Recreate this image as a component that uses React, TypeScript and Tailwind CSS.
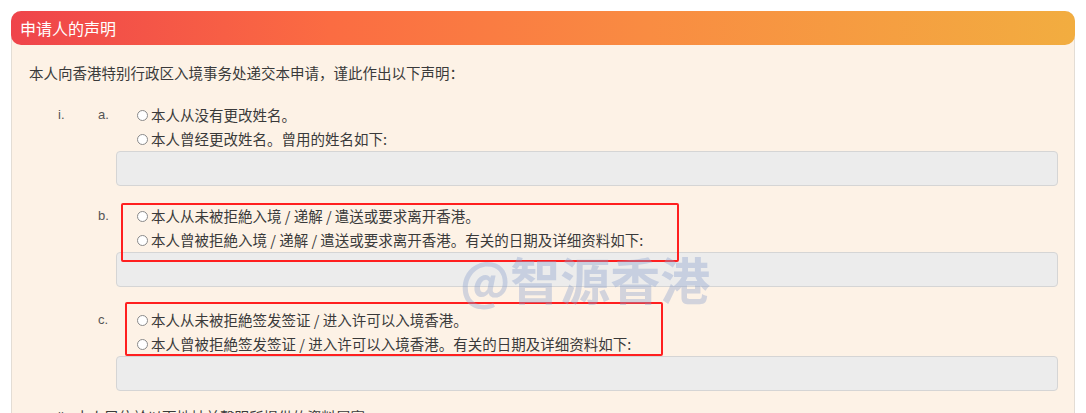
import React from 'react';

const cjk = "font-['Noto_Sans_CJK_SC','Noto_Sans',sans-serif]";

const Radio = ({ label }: { label: string }) => (
  <label className="flex items-center h-[24px] text-[14.5px] text-[#3a3a3a] leading-none">
    <span className="w-[11px] h-[11px] rounded-full border border-[#8a8a8a] bg-white mr-[3px] shrink-0" />
    <span>{label}</span>
  </label>
);

const Item = ({ letter, options, className }: { letter: string; options: string[]; className?: string }) => (
  <div className={`flex ${className ?? ''}`}>
    <div className="w-[18px] h-[24px] flex items-center text-[13px] text-[#555] font-['Liberation_Sans',sans-serif]">
      {letter}
    </div>
    <div className="flex-1">
      <div className="pl-[21px]">
        {options.map((o) => (
          <Radio key={o} label={o} />
        ))}
      </div>
      <div className="h-[35px] rounded-[4px] border border-[#d5d5d5] bg-[#ececec]" />
    </div>
  </div>
);

export default function App() {
  return (
    <div className={`relative w-[1086px] h-[413px] overflow-hidden bg-white ${cjk}`}>
      <div className="ml-[11px] mt-[11px] w-[1064px] h-[420px] bg-[#fdf2e6] border-x border-[#e3ddd5] rounded-t-[10px]">
        {/* header bar */}
        <div className="h-[34px] -mx-px rounded-[10px] bg-[linear-gradient(90deg,#ef444b_0%,#fb6c42_30%,#f98c42_60%,#f2ad40_100%)] flex items-center pl-[9px]">
          <span className="text-white text-[16px] leading-none">申请人的声明</span>
        </div>

        <div className="pl-[17px] pr-[16px]">
          <p className="mt-[18px] h-[20px] leading-[20px] text-[14.5px] text-[#3a3a3a]">
            本人向香港特别行政区入境事务处递交本申请，谨此作出以下声明：
          </p>

          <div className="mt-[20px] flex">
            <div className="w-[69px] pl-[29px] h-[24px] flex items-center text-[13px] text-[#555] font-['Liberation_Sans',sans-serif]">
              i.
            </div>
            <div className="flex-1">
              <Item letter="a." options={['本人从没有更改姓名。', '本人曾经更改姓名。曾用的姓名如下:']} />
              <Item
                className="mt-[18px]"
                letter="b."
                options={['本人从未被拒絶入境 / 递解 / 遣送或要求离开香港。', '本人曾被拒絶入境 / 递解 / 遣送或要求离开香港。有关的日期及详细资料如下:']}
              />
              <Item
                className="mt-[21px]"
                letter="c."
                options={['本人从未被拒絶签发签证 / 进入许可以入境香港。', '本人曾被拒絶签发签证 / 进入许可以入境香港。有关的日期及详细资料如下:']}
              />
            </div>
          </div>

          <div className="mt-[14px] flex h-[24px] items-center">
            <div className="w-[46px] pl-[29px] text-[13px] text-[#555] font-['Liberation_Sans',sans-serif]">ii.</div>
            <span className="text-[14.5px] text-[#3a3a3a]">本人居住於以下地址並聲明所提供的資料屬實：</span>
          </div>
        </div>
      </div>

      {/* annotation boxes */}
      <div className="absolute left-[121px] top-[203px] w-[558px] h-[59px] border-[2.5px] border-[#ff1f1f] rounded-[2px]" />
      <div className="absolute left-[125px] top-[302px] w-[538px] h-[54px] border-[2.5px] border-[#ff1f1f] rounded-[2px]" />

      {/* watermark */}
      <div className="absolute left-[460px] top-[252px] text-[50px] leading-[52px] font-bold text-[rgba(140,160,205,0.38)] select-none">
        @智源香港
      </div>
    </div>
  );
}
